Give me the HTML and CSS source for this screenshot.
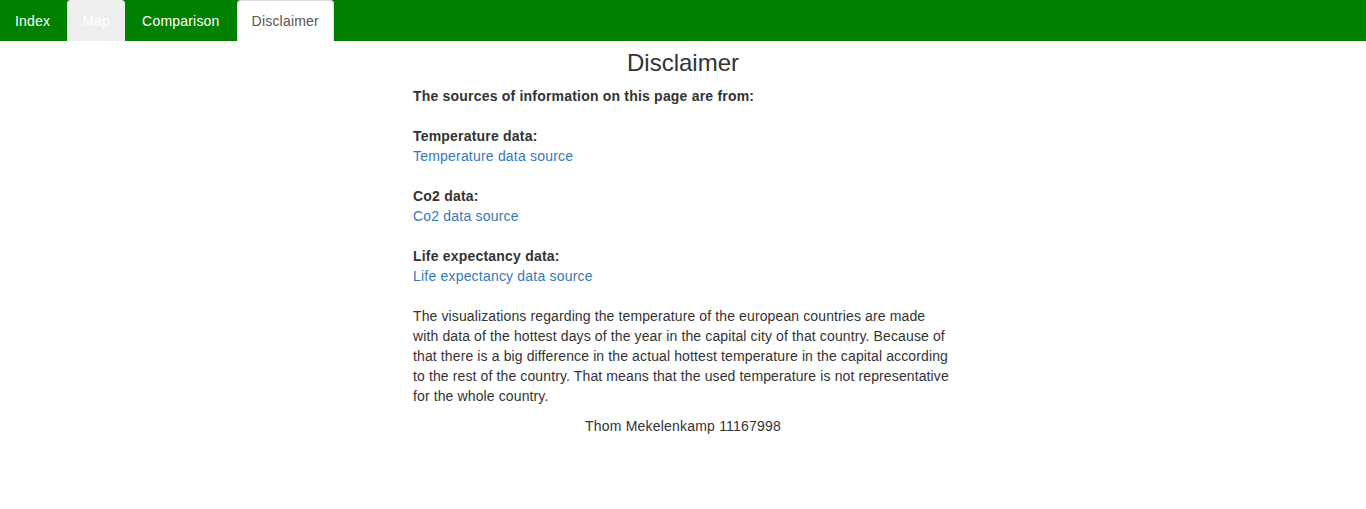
FILE: index.html
```html
<!DOCTYPE html>
<html lang="en">
<head>
<meta charset="utf-8">
<title>Disclaimer</title>
<link rel="stylesheet" href="styles.css">
</head>
<body>
<nav class="tabs">
  <a class="tab" href="#">Index</a>
  <a class="tab tab-hover" href="#">Map</a>
  <a class="tab" href="#">Comparison</a>
  <a class="tab tab-active" href="#">Disclaimer</a>
</nav>
<main class="content">
  <h1 class="title">Disclaimer</h1>
  <p class="label">The sources of information on this page are from:</p>
  <div class="source">
    <p class="label">Temperature data:</p>
    <a class="link" href="#">Temperature data source</a>
  </div>
  <div class="source">
    <p class="label">Co2 data:</p>
    <a class="link" href="#">Co2 data source</a>
  </div>
  <div class="source">
    <p class="label">Life expectancy data:</p>
    <a class="link" href="#">Life expectancy data source</a>
  </div>
  <p class="text">The visualizations regarding the temperature of the european countries are made with data of the hottest days of the year in the capital city of that country. Because of that there is a big difference in the actual hottest temperature in the capital according to the rest of the country. That means that the used temperature is not representative for the whole country.</p>
  <p class="author">Thom Mekelenkamp 11167998</p>
</main>
</body>
</html>
```
FILE: styles.css
```css
html, body {
  margin: 0;
  padding: 0;
  background: #fff;
}
body {
  font-family: "Liberation Sans", Arial, Helvetica, sans-serif;
  font-size: 14px;
  line-height: 20px;
  letter-spacing: 0.2px;
  color: #333;
}
.tabs {
  display: flex;
  align-items: flex-start;
  height: 41px;
  background: #008000;
}
.tab {
  display: block;
  padding: 10px 14px;
  margin-right: 2px;
  line-height: 20px;
  border: 1px solid transparent;
  border-bottom: 0;
  border-radius: 4px 4px 0 0;
  color: #fff;
  text-decoration: none;
}
.tab-hover {
  background: #eee;
  border-color: #eee;
}
.tab-active {
  background: #fff;
  color: #555;
  border-color: #ddd;
}
.content {
  width: 540px;
  margin: 0 auto;
}
.title {
  margin: 9px 0 10px;
  font-size: 24px;
  font-weight: 500;
  line-height: 26.4px;
  letter-spacing: 0;
  text-align: center;
}
.label {
  margin: 0;
  font-weight: bold;
}
.source {
  margin-top: 20px;
}
.link {
  display: block;
  color: #337ab7;
  text-decoration: none;
}
.text {
  margin: 20px 0 10px;
  letter-spacing: 0.12px;
}
.author {
  margin: 0;
  text-align: center;
}
```
